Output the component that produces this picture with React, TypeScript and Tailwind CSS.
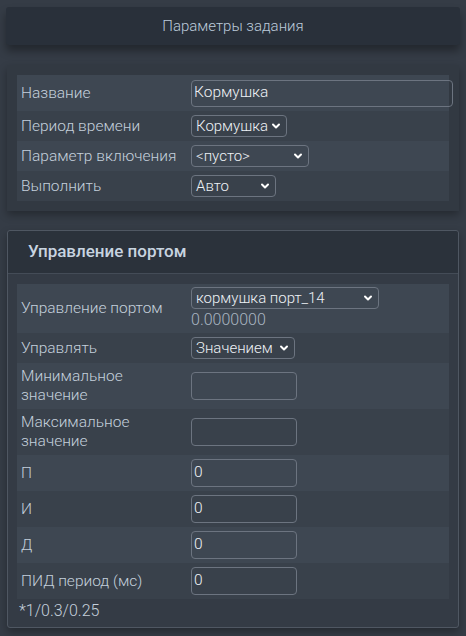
import React from "react";

const font = { fontFamily: "Roboto, 'Liberation Sans', sans-serif" };

function Chevron() {
  return (
    <svg width="10" height="7" viewBox="0 0 10 7" className="absolute right-[5px] top-1/2 -translate-y-1/2">
      <path d="M2 2 L5 5 L8 2" fill="none" stroke="#ffffff" strokeWidth="2" strokeLinecap="round" strokeLinejoin="round" />
    </svg>
  );
}

function Select({ value, w }: { value: string; w: string }) {
  return (
    <div
      className={`relative h-[22px] ${w} rounded-[4px] border border-[#6c7480] text-[15px] font-light text-[#eef2f6] leading-[20px] pl-[4px]`}
    >
      {value}
      <Chevron />
    </div>
  );
}

function Input({ value, w, h }: { value: string; w: string; h: string }) {
  return (
    <div
      className={`${w} ${h} rounded-[4px] border border-[#6c7480] text-[15.5px] font-light text-[#eef2f6] flex items-center pl-[2px]`}
    >
      {value}
    </div>
  );
}

function Row({ label, children, h, odd }: { label: React.ReactNode; children: React.ReactNode; h: string; odd: boolean }) {
  return (
    <div className={`grid grid-cols-[174px_1fr] items-center ${h} ${odd ? "bg-[#3e4752]" : "bg-[#39414b]"}`}>
      <div className="pl-[4px] text-[15.5px] font-light text-[#c4d0dc] leading-[19px]">{label}</div>
      <div>{children}</div>
    </div>
  );
}

export default function App() {
  return (
    <div className="min-h-[636px] bg-[#353c46] px-[7px] pt-[7px]" style={font}>
      <div className="-mx-px h-[38px] rounded-[3px] bg-[#29303a] shadow-[0_6px_8px_rgba(0,0,0,0.35)] flex items-center justify-center text-[15px] font-light text-[#bccbda]">
        Параметры задания
      </div>

      <div className="mt-[20px] bg-[#323942] px-[10px] py-[10px] shadow-[0_4px_8px_rgba(0,0,0,0.3)]">
        <Row label="Название" h="h-[36px]" odd>
          <Input value="Кормушка" w="w-[262px]" h="h-[27px]" />
        </Row>
        <Row label="Период времени" h="h-[30px]" odd={false}>
          <Select value="Кормушка" w="w-[96px]" />
        </Row>
        <Row label="Параметр включения" h="h-[30px]" odd>
          <Select value="<пусто>" w="w-[118px]" />
        </Row>
        <Row label="Выполнить" h="h-[30px]" odd={false}>
          <Select value="Авто" w="w-[85px]" />
        </Row>
      </div>

      <div className="mt-[19px] rounded-[3px] border border-[#4f5762] bg-[#343b45] shadow-[0_4px_8px_rgba(0,0,0,0.3)]">
        <div className="h-[43px] bg-[#2b323b] border-b border-[#444c57] flex items-center pl-[20px] text-[17px] font-medium text-[#c8d4e0] rounded-t-[3px]">
          Управление портом
        </div>
        <div className="px-[9px] pt-[10px] pb-[4px]">
          <Row label="Управление портом" h="h-[49px]" odd>
            <div className="flex flex-col">
              <Select value="кормушка порт_14" w="w-[188px]" />
              <div className="text-[16px] font-light text-[#a9b5c1] leading-[22px]">0.0000000</div>
            </div>
          </Row>
          <Row label="Управлять" h="h-[30px]" odd={false}>
            <Select value="Значением" w="w-[104px]" />
          </Row>
          <Row label={<>Минимальное<br />значение</>} h="h-[46px]" odd>
            <Input value="" w="w-[106px]" h="h-[28px]" />
          </Row>
          <Row label={<>Максимальное<br />значение</>} h="h-[46px]" odd={false}>
            <Input value="" w="w-[106px]" h="h-[28px]" />
          </Row>
          <Row label="П" h="h-[36px]" odd>
            <Input value="0" w="w-[106px]" h="h-[28px]" />
          </Row>
          <Row label="И" h="h-[36px]" odd={false}>
            <Input value="0" w="w-[106px]" h="h-[28px]" />
          </Row>
          <Row label="Д" h="h-[36px]" odd>
            <Input value="0" w="w-[106px]" h="h-[28px]" />
          </Row>
          <Row label="ПИД период (мс)" h="h-[36px]" odd={false}>
            <Input value="0" w="w-[106px]" h="h-[28px]" />
          </Row>
          <div className="pl-[2px] h-[24px] flex items-center text-[16px] font-light text-[#c4d0dc]">*1/0.3/0.25</div>
        </div>
      </div>
    </div>
  );
}
